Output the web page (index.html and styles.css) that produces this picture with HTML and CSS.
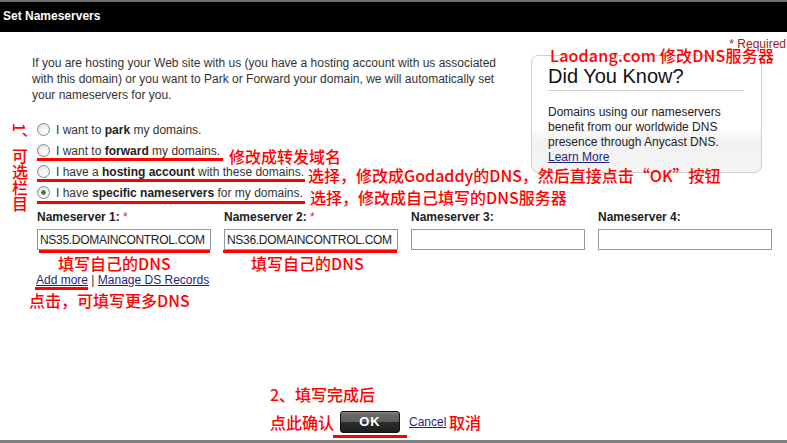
FILE: index.html
```html
<!DOCTYPE html>
<html lang="zh-CN">
<head>
<meta charset="utf-8">
<title>Set Nameservers</title>
<link rel="stylesheet" href="styles.css">
</head>
<body>
<div class="page">
  <header class="titlebar">Set Nameservers</header>
  <div class="required">* Required</div>
  <div class="top">
    <div class="left">
      <p class="intro">If you are hosting your Web site with us (you have a hosting account with us associated with this domain) or you want to Park or Forward your domain, we will automatically set your nameservers for you.</p>
      <ul class="options">
        <li><label class="opt"><input type="radio" name="ns" class="radio"><span>I want to <b>park</b> my domains.</span></label></li>
        <li><label class="opt"><input type="radio" name="ns" class="radio"><span>I want to <b>forward</b> my domains.</span></label></li>
        <li><label class="opt"><input type="radio" name="ns" class="radio"><span>I have a <b>hosting account</b> with these domains.</span></label></li>
        <li><label class="opt"><input type="radio" name="ns" class="radio" checked><span>I have <b>specific nameservers</b> for my domains.</span></label></li>
      </ul>
    </div>
    <aside class="dyk">
      <h2 class="dyk-title">Did You Know?</h2>
      <p class="dyk-text">Domains using our nameservers benefit from our worldwide DNS presence through Anycast DNS.<a class="link dyk-link" href="#">Learn More</a></p>
    </aside>
  </div>
  <div class="ns-grid">
    <div class="ns-field"><label class="ns-label">Nameserver 1: <span class="star">*</span></label><input class="ns-input" type="text" value="NS35.DOMAINCONTROL.COM"></div>
    <div class="ns-field"><label class="ns-label">Nameserver 2: <span class="star">*</span></label><input class="ns-input" type="text" value="NS36.DOMAINCONTROL.COM"></div>
    <div class="ns-field"><label class="ns-label">Nameserver 3:</label><input class="ns-input" type="text" value=""></div>
    <div class="ns-field"><label class="ns-label">Nameserver 4:</label><input class="ns-input" type="text" value=""></div>
  </div>
  <div class="links"><a class="link" href="#">Add more</a> | <a class="link" href="#">Manage DS Records</a></div>
  <div class="actions"><button class="ok" type="button">OK</button><a class="link cancel" href="#">Cancel</a></div>
  <div class="footer"></div>

  <div class="note note-title">Laodang.com 修改DNS服务器</div>
  <div class="note note-vert">1、可选栏目</div>
  <div class="note note-fwd">修改成转发域名</div>
  <div class="note note-host">选择，修改成Godaddy的DNS，然后直接点击“OK”按钮</div>
  <div class="note note-spec">选择，修改成自己填写的DNS服务器</div>
  <div class="note note-ns1">填写自己的DNS</div>
  <div class="note note-ns2">填写自己的DNS</div>
  <div class="note note-more">点击，可填写更多DNS</div>
  <div class="note note-done">2、填写完成后</div>
  <div class="note note-confirm">点此确认</div>
  <div class="note note-cancel">取消</div>

  <div class="mark mark-fwd"></div>
  <div class="mark mark-host"></div>
  <div class="mark mark-spec"></div>
  <div class="mark mark-ns1"></div>
  <div class="mark mark-ns2"></div>
  <div class="mark mark-more"></div>
  <div class="mark mark-ok"></div>
</div>
</body>
</html>
```
FILE: styles.css
```css
* { box-sizing: border-box; }
html, body { margin: 0; padding: 0; background: #fff; }
body { font-family: "Liberation Sans", Arial, sans-serif; font-size: 12px; color: #333; }

.page {
  position: relative;
  width: 787px;
  height: 443px;
  display: flex;
  flex-direction: column;
  overflow: hidden;
}

.titlebar {
  height: 32px;
  border-top: 2px solid #6d6d6d;
  background: #000;
  color: #fff;
  font-weight: bold;
  font-size: 12px;
  line-height: 28px;
  padding-left: 3px;
}

.required {
  height: 23px;
  padding-top: 5px;
  line-height: 14px;
  text-align: right;
  padding-right: 1px;
  color: #9b2020;
  font-size: 12px;
}

.top { display: flex; padding-left: 32px; }
.left { width: 499px; }
.intro { margin: 0; width: 478px; line-height: 16px; color: #333; }

.options { list-style: none; margin: 16px 0 0 5px; padding: 0; }
.options li { height: 21px; display: flex; align-items: center; }
.opt { display: flex; align-items: center; gap: 6px; color: #333; }
.opt b { color: #222; }

.radio {
  appearance: none;
  -webkit-appearance: none;
  margin: 0;
  width: 13px;
  height: 13px;
  border-radius: 50%;
  border: 1px solid #7c8a96;
  background: radial-gradient(circle at 65% 70%, #fff 0, #f3f3f0 45%, #d6d6d0 100%);
}
.radio:checked {
  background: radial-gradient(circle, #3d6b3d 0, #4f7f4f 2px, transparent 2.6px),
              radial-gradient(circle at 65% 70%, #fff 0, #f3f3f0 45%, #d6d6d0 100%);
}

.dyk {
  width: 231px;
  height: 118px;
  border: 1px solid #cfcfcf;
  border-radius: 7px;
  background: linear-gradient(#fff 0, #fff 62%, #f2f2f2 72%, #f4f4f4 100%);
  padding: 0 17px 0 16px;
}
.dyk-title {
  margin: 0;
  font-size: 20px;
  font-weight: normal;
  color: #111;
  line-height: 22px;
  padding-top: 9px;
  padding-bottom: 3px;
  border-bottom: 1px solid #cfcfcf;
}
.dyk-text { margin: 14px 0 0; line-height: 15px; color: #222; }
.dyk-link { display: block; }

.link { color: #1f1f80; text-decoration: underline; }

.ns-grid {
  display: grid;
  grid-template-columns: repeat(4, 174px);
  column-gap: 13px;
  padding-left: 37px;
  margin-top: 7px;
}
.ns-field { display: flex; flex-direction: column; }
.ns-label { font-weight: bold; color: #222; line-height: 14px; }
.star { color: #c03030; font-weight: normal; }
.ns-input {
  margin-top: 5px;
  height: 21px;
  width: 174px;
  border: 1px solid #8a9ca6;
  padding: 0 0 0 2px;
  font-family: "Liberation Sans", Arial, sans-serif;
  font-size: 12px;
  letter-spacing: -0.3px;
  color: #222;
  background: #fff;
  outline: none;
}

.links { margin-top: 23px; padding-left: 36px; line-height: 14px; color: #333; }

.actions {
  margin-top: 124px;
  padding-left: 340px;
  display: flex;
  align-items: center;
  gap: 9px;
}
.ok {
  width: 60px;
  height: 22px;
  border: 1px solid #111;
  border-radius: 3px;
  background: linear-gradient(#8a8a86 0, #6a6a67 2px, #5e5e5b 50%, #2c2c2c 50%, #1e1e1e 100%);
  color: #fff;
  font-family: "Liberation Sans", Arial, sans-serif;
  font-weight: bold;
  font-size: 13px;
  letter-spacing: 1px;
  padding: 0;
  line-height: 20px;
}
.cancel { line-height: 14px; }

.footer { margin-top: auto; height: 3px; background: #808080; }

.note {
  position: absolute;
  color: #f00;
  font-family: "Noto Sans CJK SC", sans-serif;
  font-size: 16px;
  font-weight: 500;
  line-height: 18px;
  white-space: nowrap;
}
.note-title { left: 550px; top: 46px; letter-spacing: 0.2px; }
.note-vert { left: 11px; top: 123px; writing-mode: vertical-rl; line-height: 18px; }
.note-fwd { left: 229px; top: 147px; }
.note-host { left: 308px; top: 166px; }
.note-spec { left: 310px; top: 188px; }
.note-ns1 { left: 58px; top: 254px; }
.note-ns2 { left: 251px; top: 254px; }
.note-more { left: 29px; top: 291px; }
.note-done { left: 270px; top: 385px; }
.note-confirm { left: 270px; top: 413px; }
.note-cancel { left: 449px; top: 413px; }

.mark { position: absolute; height: 3px; background: #f00; }
.mark-fwd { left: 37px; width: 186px; top: 158px; }
.mark-host { left: 37px; width: 268px; top: 179px; }
.mark-spec { left: 37px; width: 268px; top: 201px; }
.mark-ns1 { left: 39px; width: 171px; top: 250px; }
.mark-ns2 { left: 223px; width: 174px; top: 250px; }
.mark-more { left: 35px; width: 53px; top: 287px; }
.mark-ok { left: 333px; width: 74px; top: 435px; }
```
